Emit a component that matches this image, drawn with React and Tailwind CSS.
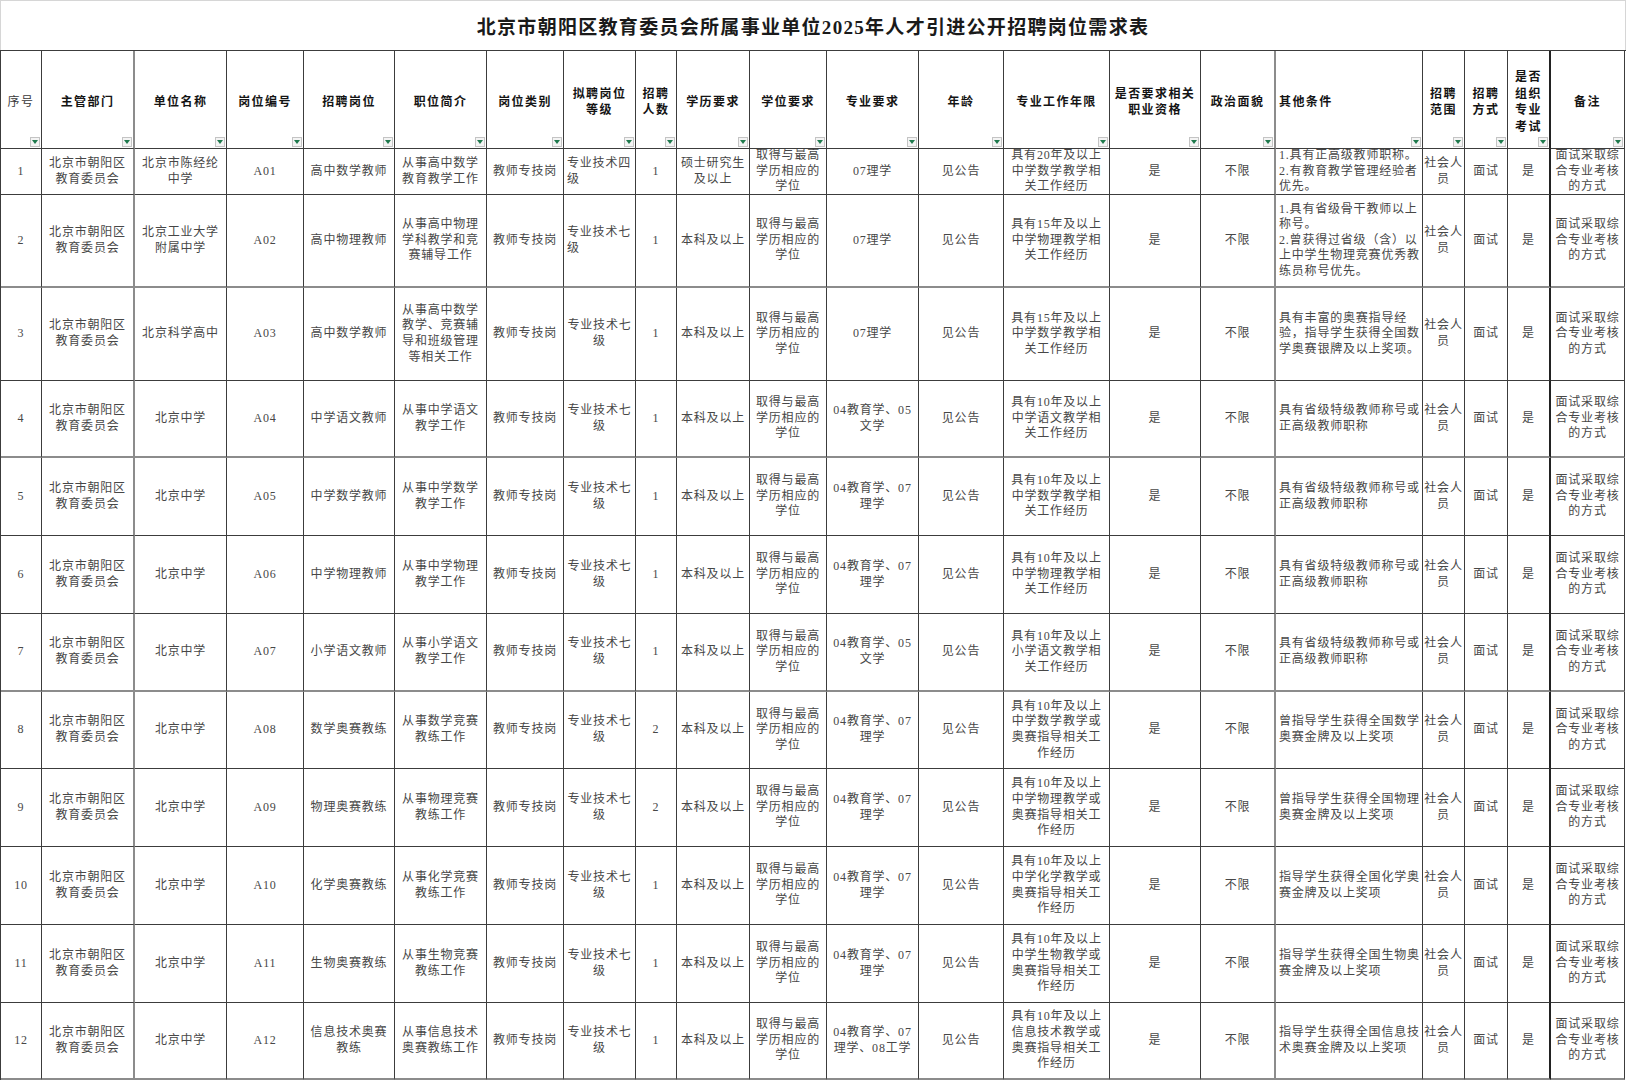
import React from "react";

const headers = [
  { t: "序号", normal: true },
  { t: "主管部门" },
  { t: "单位名称" },
  { t: "岗位编号" },
  { t: "招聘岗位" },
  { t: "职位简介" },
  { t: "岗位类别" },
  { t: "拟聘岗位\n等级" },
  { t: "招聘\n人数" },
  { t: "学历要求" },
  { t: "学位要求" },
  { t: "专业要求" },
  { t: "年龄" },
  { t: "专业工作年限" },
  { t: "是否要求相关\n职业资格" },
  { t: "政治面貌" },
  { t: "其他条件", left: true },
  { t: "招聘\n范围" },
  { t: "招聘\n方式" },
  { t: "是否\n组织\n专业\n考试" },
  { t: "备注" },
];

const dept = "北京市朝阳区\n教育委员会";
const tail = ["社会人\n员", "面试", "是", "面试采取综\n合专业考核\n的方式"];
const degree = "取得与最高\n学历相应的\n学位";

const mk = (n, unit, code, post, intro, grade, count, edu, major, years, other) => [
  String(n),
  dept,
  unit,
  code,
  post,
  intro,
  "教师专技岗",
  grade,
  count,
  edu,
  degree,
  major,
  "见公告",
  years,
  "是",
  "不限",
  other,
  ...tail,
];

const rows = [
  {
    leftGrade: true,
    cells: mk(
      1,
      "北京市陈经纶\n中学",
      "A01",
      "高中数学教师",
      "从事高中数学\n教育教学工作",
      "专业技术四\n级",
      "1",
      "硕士研究生\n及以上",
      "07理学",
      "具有20年及以上\n中学数学教学相\n关工作经历",
      "1.具有正高级教师职称。\n2.有教育教学管理经验者\n优先。"
    ),
  },
  {
    leftGrade: true,
    cells: mk(
      2,
      "北京工业大学\n附属中学",
      "A02",
      "高中物理教师",
      "从事高中物理\n学科教学和竞\n赛辅导工作",
      "专业技术七\n级",
      "1",
      "本科及以上",
      "07理学",
      "具有15年及以上\n中学物理教学相\n关工作经历",
      "1.具有省级骨干教师以上\n称号。\n2.曾获得过省级（含）以\n上中学生物理竞赛优秀教\n练员称号优先。"
    ),
  },
  {
    cells: mk(
      3,
      "北京科学高中",
      "A03",
      "高中数学教师",
      "从事高中数学\n教学、竞赛辅\n导和班级管理\n等相关工作",
      "专业技术七\n级",
      "1",
      "本科及以上",
      "07理学",
      "具有15年及以上\n中学数学教学相\n关工作经历",
      "具有丰富的奥赛指导经\n验，指导学生获得全国数\n学奥赛银牌及以上奖项。"
    ),
  },
  {
    cells: mk(4, "北京中学", "A04", "中学语文教师", "从事中学语文\n教学工作", "专业技术七\n级", "1", "本科及以上", "04教育学、05\n文学", "具有10年及以上\n中学语文教学相\n关工作经历", "具有省级特级教师称号或\n正高级教师职称"),
  },
  {
    cells: mk(5, "北京中学", "A05", "中学数学教师", "从事中学数学\n教学工作", "专业技术七\n级", "1", "本科及以上", "04教育学、07\n理学", "具有10年及以上\n中学数学教学相\n关工作经历", "具有省级特级教师称号或\n正高级教师职称"),
  },
  {
    cells: mk(6, "北京中学", "A06", "中学物理教师", "从事中学物理\n教学工作", "专业技术七\n级", "1", "本科及以上", "04教育学、07\n理学", "具有10年及以上\n中学物理教学相\n关工作经历", "具有省级特级教师称号或\n正高级教师职称"),
  },
  {
    cells: mk(7, "北京中学", "A07", "小学语文教师", "从事小学语文\n教学工作", "专业技术七\n级", "1", "本科及以上", "04教育学、05\n文学", "具有10年及以上\n小学语文教学相\n关工作经历", "具有省级特级教师称号或\n正高级教师职称"),
  },
  {
    cells: mk(8, "北京中学", "A08", "数学奥赛教练", "从事数学竞赛\n教练工作", "专业技术七\n级", "2", "本科及以上", "04教育学、07\n理学", "具有10年及以上\n中学数学教学或\n奥赛指导相关工\n作经历", "曾指导学生获得全国数学\n奥赛金牌及以上奖项"),
  },
  {
    cells: mk(9, "北京中学", "A09", "物理奥赛教练", "从事物理竞赛\n教练工作", "专业技术七\n级", "2", "本科及以上", "04教育学、07\n理学", "具有10年及以上\n中学物理教学或\n奥赛指导相关工\n作经历", "曾指导学生获得全国物理\n奥赛金牌及以上奖项"),
  },
  {
    cells: mk(10, "北京中学", "A10", "化学奥赛教练", "从事化学竞赛\n教练工作", "专业技术七\n级", "1", "本科及以上", "04教育学、07\n理学", "具有10年及以上\n中学化学教学或\n奥赛指导相关工\n作经历", "指导学生获得全国化学奥\n赛金牌及以上奖项"),
  },
  {
    cells: mk(11, "北京中学", "A11", "生物奥赛教练", "从事生物竞赛\n教练工作", "专业技术七\n级", "1", "本科及以上", "04教育学、07\n理学", "具有10年及以上\n中学生物教学或\n奥赛指导相关工\n作经历", "指导学生获得全国生物奥\n赛金牌及以上奖项"),
  },
  {
    cells: mk(12, "北京中学", "A12", "信息技术奥赛\n教练", "从事信息技术\n奥赛教练工作", "专业技术七\n级", "1", "本科及以上", "04教育学、07\n理学、08工学", "具有10年及以上\n信息技术教学或\n奥赛指导相关工\n作经历", "指导学生获得全国信息技\n术奥赛金牌及以上奖项"),
  },
];

// special vertical borders (right border of column index)
const rightBorder = (c) => {
  if (c === 1) return "border-r-2 border-r-[#8c8c8c]";
  if (c === 15) return "border-r-2 border-r-[#8c8c8c]";
  if (c === 19) return "border-r-2 border-r-[#222]";
  return "border-r border-r-[#3c3c3c]";
};
const grayBottomRows = [1, 3, 6, 11];
const bottomBorder = (r) =>
  grayBottomRows.includes(r) ? "border-b-2 border-b-[#8c8c8c]" : "border-b border-b-[#3c3c3c]";

function Dropdown() {
  return (
    <span className="absolute right-[1px] bottom-[1px] flex h-[10px] w-[10px] items-center justify-center border border-[#c4c4c4] bg-[#f4f4f4]">
      <svg width="6" height="4" viewBox="0 0 6 4">
        <path d="M0 0H6L3 4Z" fill="#1f7a4d" />
      </svg>
    </span>
  );
}

export default function App() {
  return (
    <div className="w-[1626px] h-[1080px] overflow-hidden bg-white font-['Liberation_Serif','Noto_Sans_CJK_SC',serif]">
      <div className="flex h-[50px] items-center justify-center border-t border-l border-r border-[#d6d6d6] pt-[6px]">
        <h1 className="text-[19px] font-bold tracking-[1.3px] text-[#1a1a1a]">
          北京市朝阳区教育委员会所属事业单位2025年人才引进公开招聘岗位需求表
        </h1>
      </div>
      <div className="grid grid-cols-[41px_93px_92px_77px_91px_92px_77px_72px_41px_73px_77px_92px_85px_106px_91px_75px_147px_42px_43px_43px_74px] grid-rows-[98px_46px_93px_93px_77px_78px_78px_78px_77px_78px_78px_78px_77px] border-t border-l border-[#3c3c3c]">
        {headers.map((h, c) => (
          <div
            key={"h" + c}
            className={`relative flex items-center overflow-hidden whitespace-pre pt-[5px] text-[12px] leading-[16.5px] tracking-[1.4px] border-b border-b-[#3c3c3c] ${rightBorder(c)} ${
              h.left ? "justify-start text-left pl-[3px]" : "justify-center text-center px-[1px]"
            } ${h.normal ? "font-normal text-[#3a3a3a]" : "font-bold text-[#141414]"}`}
          >
            {h.t}
            <Dropdown />
          </div>
        ))}
        {rows.map((row, r) =>
          row.cells.map((t, c) => {
            const left = c === 16 || (c === 7 && row.leftGrade);
            return (
              <div
                key={r + "-" + c}
                className={`flex items-center overflow-hidden whitespace-pre text-[12px] leading-[15.6px] tracking-[0.8px] text-[#474747] ${rightBorder(c)} ${bottomBorder(r)} ${
                  left ? "justify-start text-left pl-[3px]" : "justify-center text-center px-[1px]"
                }`}
              >
                {t}
              </div>
            );
          })
        )}
      </div>
    </div>
  );
}
